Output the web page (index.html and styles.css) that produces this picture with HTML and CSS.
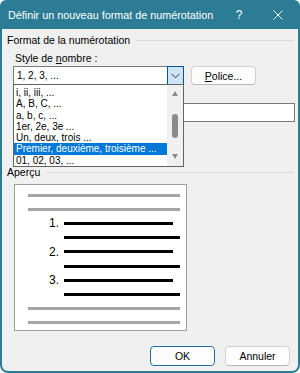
FILE: index.html
```html
<!DOCTYPE html>
<html lang="fr">
<head>
    <meta charset="UTF-8">
    <title>Définir un nouveau format de numérotation</title>
    <link rel="stylesheet" href="styles.css">
</head>
<body>
    <div class="window">
        <div class="titlebar">
            <span class="title">Définir un nouveau format de numérotation</span>
            <span class="help">?</span>
            <span class="close">
                <svg width="10" height="10" viewBox="0 0 10 10"><path d="M0.5 0.5 L9.5 9.5 M9.5 0.5 L0.5 9.5" stroke="#fff" stroke-width="1"/></svg>
            </span>
        </div>

        <div class="content">
            <div class="group-title"><span>Format de la numérotation</span></div>
            <div class="field-label">Style de <u>n</u>ombre :</div>

            <div class="style-row">
                <div class="combo">
                    <span class="combo-value">1, 2, 3, ...</span>
                    <span class="combo-btn">
                        <svg width="9" height="6" viewBox="0 0 9 6"><path d="M0.5 0.8 L4.5 4.8 L8.5 0.8" fill="none" stroke="#333" stroke-width="1"/></svg>
                    </span>

                    <div class="dropdown">
                        <ul class="dropdown-list">
                            <li>i, ii, iii, ...</li>
                            <li>A, B, C, ...</li>
                            <li>a, b, c, ...</li>
                            <li>1er, 2e, 3e ...</li>
                            <li>Un, deux, trois ...</li>
                            <li class="selected">Premier, deuxième, troisième ...</li>
                            <li>01, 02, 03, ...</li>
                        </ul>
                        <div class="scrollbar">
                            <span class="arrow up"></span>
                            <span class="thumb"></span>
                            <span class="arrow down"></span>
                        </div>
                    </div>
                </div>
                <button class="btn police"><u>P</u>olice...</button>
            </div>

            <div class="format-row"><div class="textbox"></div></div>

            <div class="group-title preview-title"><span>Aperçu</span></div>

            <div class="preview">
                <div class="pv-row"><span class="pv-line grey"></span></div>
                <div class="pv-row"><span class="pv-line grey"></span></div>
                <div class="pv-row numbered"><span class="pv-num">1.</span><span class="pv-line black short"></span></div>
                <div class="pv-row indent"><span class="pv-line black"></span></div>
                <div class="pv-row numbered"><span class="pv-num">2.</span><span class="pv-line black short"></span></div>
                <div class="pv-row indent"><span class="pv-line black"></span></div>
                <div class="pv-row numbered"><span class="pv-num">3.</span><span class="pv-line black short"></span></div>
                <div class="pv-row indent"><span class="pv-line black"></span></div>
                <div class="pv-row"><span class="pv-line grey"></span></div>
                <div class="pv-row"><span class="pv-line grey"></span></div>
            </div>

            <div class="actions">
                <button class="btn default">OK</button>
                <button class="btn">Annuler</button>
            </div>
        </div>
    </div>
</body>
</html>
```

FILE: styles.css
```css
:root {
    --title-color: #2b7c94;
    --face: #f0f0f0;
    --border: #7a7a7a;
    --select: #0078d7;
}

* {
    box-sizing: border-box;
    margin: 0;
    padding: 0;
}

body {
    font-family: "Liberation Sans", Arial, sans-serif;
    font-size: 10.5px;
    color: #000;
    background: #fff;
}

.window {
    width: 300px;
    height: 373px;
    background: var(--title-color);
    border-radius: 6px 6px 8px 8px;
    padding: 0 2px 2px;
    display: flex;
    flex-direction: column;
}

.titlebar {
    height: 29px;
    display: flex;
    align-items: center;
    color: #fff;
    padding-left: 6px;
    font-size: 10.8px;
}

.title {
    flex: 1;
    white-space: nowrap;
}

.help {
    width: 38px;
    text-align: center;
    font-size: 12px;
}

.close {
    width: 40px;
    display: flex;
    justify-content: center;
}

.content {
    flex: 1;
    background: var(--face);
    border-radius: 0 0 6px 6px;
    padding: 3px 5px 0;
}

.group-title {
    height: 16px;
    display: flex;
    align-items: center;
    gap: 6px;
    line-height: 16px;
}

.group-title::after {
    content: "";
    flex: 1;
    height: 1px;
    background: #dcdcdc;
}

.field-label {
    margin: 2px 0 0 8px;
    height: 16px;
    line-height: 16px;
}

.style-row {
    display: flex;
    gap: 7px;
    margin-left: 6px;
}

.combo {
    position: relative;
    width: 171px;
    height: 19px;
    background: #fff;
    border: 1px solid var(--border);
    display: flex;
    align-items: center;
}

.combo-value {
    flex: 1;
    padding-left: 3px;
    font-size: 10px;
}

.combo-btn {
    width: 17px;
    height: 19px;
    margin: -1px -1px -1px 0;
    background: #cce4f7;
    border: 1px solid #005499;
    display: flex;
    align-items: center;
    justify-content: center;
}

.dropdown {
    position: absolute;
    top: 17px;
    left: -1px;
    width: 171px;
    height: 83px;
    background: #fff;
    border: 1px solid #646464;
    display: flex;
    z-index: 2;
}

.dropdown-list {
    list-style: none;
    flex: 1;
    padding-top: 2px;
    font-size: 10px;
}

.dropdown-list li {
    height: 11.3px;
    line-height: 11.3px;
    padding-left: 2px;
    white-space: nowrap;
    overflow: hidden;
}

.dropdown-list li.selected {
    background: var(--select);
    color: #fff;
}

.scrollbar {
    width: 16px;
    background: var(--face);
    display: flex;
    flex-direction: column;
    align-items: center;
    padding-top: 6px;
}

.arrow {
    width: 0;
    height: 0;
    border-left: 3.5px solid transparent;
    border-right: 3.5px solid transparent;
}

.arrow.up {
    border-bottom: 5px solid #8a8a8a;
}

.arrow.down {
    border-top: 5px solid #8a8a8a;
    margin-top: 16px;
}

.thumb {
    width: 6px;
    height: 24px;
    margin-top: 18px;
    border-radius: 3px;
    background: #8a8a8a;
}

.btn {
    font-family: inherit;
    font-size: 10.5px;
    width: 65px;
    height: 20px;
    background: #fdfdfd;
    border: 1px solid #d0d0d0;
    border-bottom-color: #b8b8b8;
    border-radius: 4px;
    color: #000;
}

.btn.police {
    height: 19px;
}

.btn.default {
    border: 1px solid #1a6fb4;
    box-shadow: inset 0 0 0 1px #fff;
}

.format-row {
    margin: 18px 0 0 7px;
}

.textbox {
    height: 19px;
    width: 281px;
    background: #fff;
    border: 1px solid var(--border);
}

.preview-title {
    margin-top: 42px;
}

.preview {
    width: 173px;
    height: 147px;
    margin: 4px 0 0 7px;
    background: #fff;
    border: 1px solid #a0a0a0;
    padding: 3px 6px 0 13px;
}

.pv-row {
    height: 14.2px;
    display: flex;
    align-items: center;
}

.pv-line {
    height: 3px;
    flex: 1;
}

.pv-line.grey {
    background: #a6a6a6;
}

.pv-line.black {
    background: #000;
    margin-left: 36px;
}

.pv-row.numbered .pv-line {
    margin-left: 5px;
    margin-right: 7px;
}

.pv-num {
    width: 31px;
    text-align: right;
    font-size: 12px;
}

.actions {
    display: flex;
    justify-content: flex-end;
    gap: 10px;
    margin: 15px 3px 0 0;
}
```
